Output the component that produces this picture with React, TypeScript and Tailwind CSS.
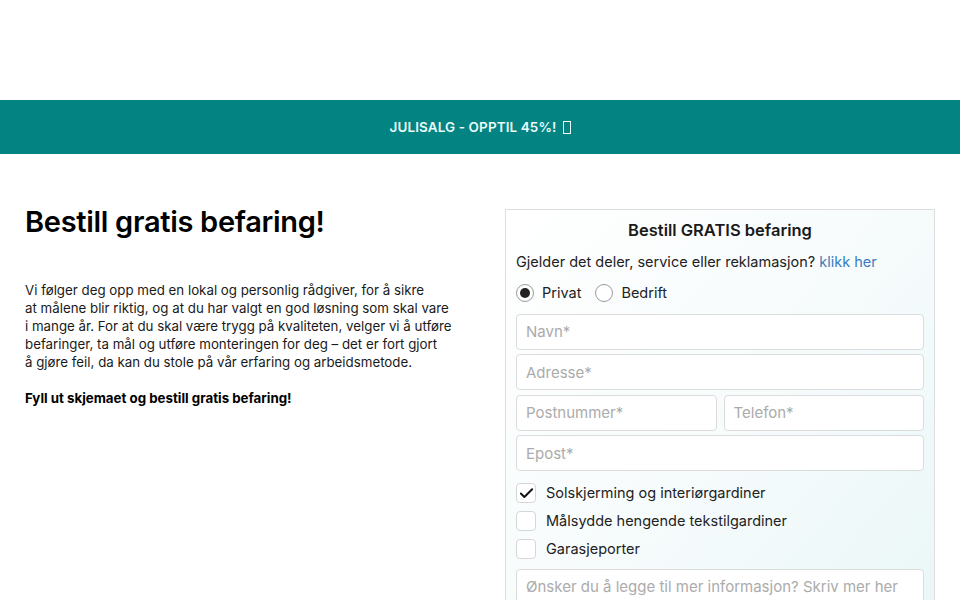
import { Check } from "lucide-react";

const font = { fontFamily: "Inter, 'Noto Sans', sans-serif" };

function Field({ placeholder, className = "" }: { placeholder: string; className?: string }) {
  return (
    <input
      placeholder={placeholder}
      className={`h-9 w-full rounded-[4px] border border-[#dcdcdc] bg-white px-[9px] text-[15px] text-gray-700 placeholder:text-[#ababab] outline-none ${className}`}
    />
  );
}

function Box({ label, checked = false }: { label: string; checked?: boolean }) {
  return (
    <label className="flex h-5 items-center gap-[10px] text-[14.5px] text-[#222]">
      <span className="flex size-5 items-center justify-center rounded-[4px] border border-[#d6d6d6] bg-white">
        {checked && <Check className="size-[17px] text-[#111]" strokeWidth={2.75} />}
      </span>
      {label}
    </label>
  );
}

function Radio({ label, checked = false }: { label: string; checked?: boolean }) {
  return (
    <label className="flex items-center gap-2 text-[14.5px] text-[#222]">
      <span className="flex size-[18px] items-center justify-center rounded-full border border-[#9a9a9a] bg-white">
        {checked && <span className="size-[10px] rounded-full bg-[#222]" />}
      </span>
      {label}
    </label>
  );
}

export default function App() {
  return (
    <div className="min-h-screen bg-white" style={font}>
      {/* Header space */}
      <div className="h-[100px] bg-white" />

      {/* Campaign banner */}
      <div className="flex h-[54px] items-center justify-center bg-[#038381] text-[13.5px] font-semibold tracking-[0.1px] text-[#e9fbfb]">
        JULISALG - OPPTIL 45%!
        <span className="ml-[6px] inline-block h-[13px] w-[8px] border border-[#e9fbfb]" />
      </div>

      <div className="flex gap-[50px] px-[25px] pt-[55px]">
        {/* Intro */}
        <div className="w-[430px] shrink-0">
          <h1 className="-mt-[4px] text-[29px] font-semibold leading-[34px] tracking-[-0.3px] text-black">
            Bestill gratis befaring!
          </h1>
          <p className="mt-[42px] text-[13.3px] leading-[18px] text-[#1a1a1a]">
            Vi følger deg opp med en lokal og personlig rådgiver, for å sikre
            <br />
            at målene blir riktig, og at du har valgt en god løsning som skal vare
            <br />
            i mange år. For at du skal være trygg på kvaliteten, velger vi å utføre
            <br />
            befaringer, ta mål og utføre monteringen for deg – det er fort gjort
            <br />
            å gjøre feil, da kan du stole på vår erfaring og arbeidsmetode.
          </p>
          <p className="mt-[18px] text-[13.3px] font-bold leading-[18px] text-black">
            Fyll ut skjemaet og bestill gratis befaring!
          </p>
        </div>

        {/* Booking form */}
        <div className="w-[430px] shrink-0 border border-[#dedede] bg-gradient-to-br from-white via-[#f6fbfc] to-[#e8f6f6] px-[10px] pb-6 pt-[9px]">
          <h2 className="text-center text-[16.5px] font-semibold leading-[22px] text-[#1a1a1a]">
            Bestill GRATIS befaring
          </h2>
          <p className="mt-[11px] text-[14.5px] leading-[20px] text-[#222]">
            Gjelder det deler, service eller reklamasjon?{" "}
            <a className="text-[#3b7dc0]">klikk her</a>
          </p>
          <div className="mt-[10px] flex items-center gap-[14px]">
            <Radio label="Privat" checked />
            <Radio label="Bedrift" />
          </div>

          <div className="mt-[10px] flex flex-col gap-[4.5px]">
            <Field placeholder="Navn*" />
            <Field placeholder="Adresse*" />
            <div className="flex gap-[7px]">
              <Field placeholder="Postnummer*" />
              <Field placeholder="Telefon*" />
            </div>
            <Field placeholder="Epost*" />
          </div>

          <div className="mt-[12px] flex flex-col gap-2">
            <Box label="Solskjerming og interiørgardiner" checked />
            <Box label="Målsydde hengende tekstilgardiner" />
            <Box label="Garasjeporter" />
          </div>

          <textarea
            placeholder="Ønsker du å legge til mer informasjon? Skriv mer her"
            className="mt-[10px] h-[90px] w-full resize-none rounded-[4px] border border-[#dcdcdc] bg-white px-[9px] py-[6px] text-[15px] text-gray-700 placeholder:text-[#ababab] outline-none"
          />
        </div>
      </div>
    </div>
  );
}
